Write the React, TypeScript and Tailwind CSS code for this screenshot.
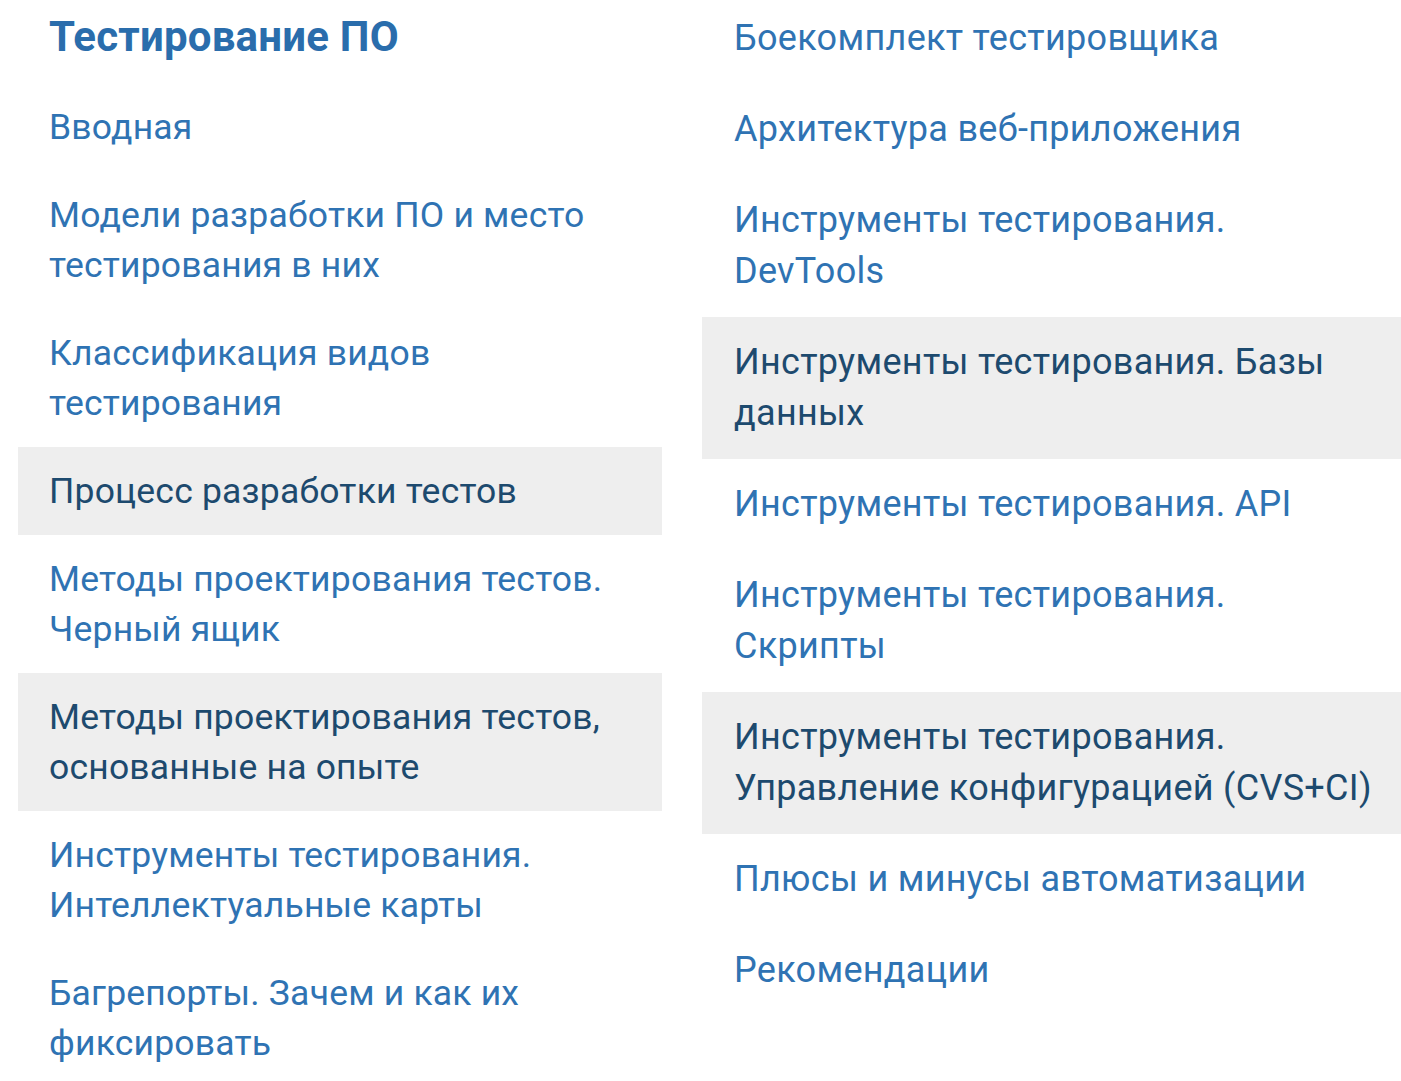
import React from 'react';

type Item = { title: string; active?: boolean };

const leftItems: Item[] = [
  { title: 'Вводная' },
  { title: 'Модели разработки ПО и место тестирования в них' },
  { title: 'Классификация видов тестирования' },
  { title: 'Процесс разработки тестов', active: true },
  { title: 'Методы проектирования тестов. Черный ящик' },
  { title: 'Методы проектирования тестов, основанные на опыте', active: true },
  { title: 'Инструменты тестирования. Интеллектуальные карты' },
  { title: 'Багрепорты. Зачем и как их фиксировать' },
];

const rightItems: Item[] = [
  { title: 'Боекомплект тестировщика' },
  { title: 'Архитектура веб-приложения' },
  { title: 'Инструменты тестирования. DevTools' },
  { title: 'Инструменты тестирования. Базы данных', active: true },
  { title: 'Инструменты тестирования. API' },
  { title: 'Инструменты тестирования. Скрипты' },
  { title: 'Инструменты тестирования. Управление конфигурацией (CVS+CI)', active: true },
  { title: 'Плюсы и минусы автоматизации' },
  { title: 'Рекомендации' },
];

const LeftItem = ({ item }: { item: Item }) => (
  <a
    href="#"
    className={
      item.active
        ? 'block bg-[#eeeeee] pl-[31px] pr-[30px] py-[19px] text-[#1d4a6e]'
        : 'block pl-[31px] pr-[30px] py-[19px] text-[#2f73b3]'
    }
  >
    {item.title}
  </a>
);

const RightItem = ({ item }: { item: Item }) => (
  <a
    href="#"
    className={
      item.active
        ? 'block bg-[#eeeeee] pl-[32px] pr-[26px] py-[20px] text-[#1d4a6e]'
        : 'block pl-[32px] pr-[26px] py-[20px] text-[#2f73b3]'
    }
  >
    {item.title}
  </a>
);

const App = () => {
  return (
    <div
      className="h-[1081px] overflow-hidden bg-white"
      style={{ fontFamily: 'Roboto, "Noto Sans", sans-serif' }}
    >
      <div className="grid grid-cols-[644px_699px] items-start gap-x-[40px] pl-[18px]">
        {/* Left column */}
        <div className="flex flex-col text-[35.5px] leading-[50px] tracking-[0.2px]">
          <h2 className="pl-[31px] pt-[12px] pb-[21px] text-[42px] font-bold leading-[50px] text-[#2a6dac]">
            Тестирование ПО
          </h2>
          {leftItems.map((item) => (
            <LeftItem key={item.title} item={item} />
          ))}
        </div>
        {/* Right column */}
        <div className="-mt-[7px] flex flex-col text-[36px] leading-[51px] tracking-[0.3px]">
          {rightItems.map((item) => (
            <RightItem key={item.title} item={item} />
          ))}
        </div>
      </div>
    </div>
  );
};

export default App;
